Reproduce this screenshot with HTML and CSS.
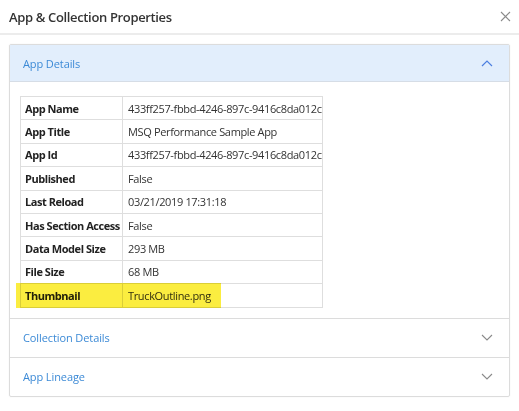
FILE: index.html
```html
<!DOCTYPE html>
<html>
<head>
<meta charset="utf-8">
<link rel="stylesheet" href="styles.css">
</head>
<body>
<div class="dialog">
  <div class="dlg-header">
    <div class="dlg-title">App &amp; Collection Properties</div>
    <svg class="close" width="11" height="11" viewBox="0 0 11 11"><path d="M1 1L10 10M10 1L1 10" stroke="#8a8a8a" stroke-width="1.1" fill="none"/></svg>
  </div>
  <div class="dlg-body">
    <div class="accordion">
      <div class="acc-item open">
        <div class="acc-head">
          <span class="acc-title">App Details</span>
          <svg class="chev" width="12" height="7" viewBox="0 0 12 7"><path d="M1 6L6 1L11 6" stroke="#4d7fe0" stroke-width="1.2" fill="none"/></svg>
        </div>
        <div class="acc-content">
          <div class="tbl-wrap">
            <table class="props">
              <tr><th>App Name</th><td>433ff257-fbbd-4246-897c-9416c8da012c</td></tr>
              <tr><th>App Title</th><td>MSQ Performance Sample App</td></tr>
              <tr><th>App Id</th><td>433ff257-fbbd-4246-897c-9416c8da012c</td></tr>
              <tr><th>Published</th><td>False</td></tr>
              <tr><th>Last Reload</th><td>03/21/2019 17:31:18</td></tr>
              <tr><th>Has Section Access</th><td>False</td></tr>
              <tr><th>Data Model Size</th><td>293 MB</td></tr>
              <tr><th>File Size</th><td>68 MB</td></tr>
              <tr><th>Thumbnail</th><td>TruckOutline.png</td></tr>
            </table>
            <div class="highlight"></div>
          </div>
        </div>
      </div>
      <div class="acc-item">
        <div class="acc-head">
          <span class="acc-title">Collection Details</span>
          <svg class="chev" width="12" height="7" viewBox="0 0 12 7"><path d="M1 1L6 6L11 1" stroke="#8a8a8a" stroke-width="1.1" fill="none"/></svg>
        </div>
      </div>
      <div class="acc-item">
        <div class="acc-head">
          <span class="acc-title">App Lineage</span>
          <svg class="chev" width="12" height="7" viewBox="0 0 12 7"><path d="M1 1L6 6L11 1" stroke="#8a8a8a" stroke-width="1.1" fill="none"/></svg>
        </div>
      </div>
    </div>
  </div>
</div>
</body>
</html>
```

FILE: styles.css
```css
html, body {
  margin: 0;
  padding: 0;
  background: #fff;
}
body {
  font-family: "Open Sans", "Noto Sans", sans-serif;
  color: #222;
}
.dialog {
  width: 519px;
  height: 411px;
  background: #fff;
}
.dlg-header {
  height: 33px;
  display: flex;
  align-items: center;
  justify-content: space-between;
  padding: 0 8px 0 9px;
  border-bottom: 2px solid #ececec;
}
.dlg-title {
  font-size: 13px;
  font-weight: 600;
  color: #333;
  letter-spacing: -0.35px;
}
.dlg-body {
  padding: 9px 9px 0 9px;
}
.accordion {
  border: 1px solid #dcdcdc;
  border-radius: 2px;
  box-shadow: 0 0 2px rgba(0,0,0,0.06);
}
.acc-item + .acc-item {
  border-top: 1px solid #dcdcdc;
}
.acc-head {
  height: 38px;
  display: flex;
  align-items: center;
  justify-content: space-between;
  padding: 0 16px 0 13px;
}
.acc-item.open .acc-head {
  background: #e2eefc;
  height: 36px;
  border-bottom: 1px solid #d6dde6;
}
.acc-title {
  font-size: 11px;
  color: #3c8ad6;
  letter-spacing: -0.1px;
}
.acc-content {
  padding: 14px 10px 10px 10px;
}
.tbl-wrap {
  position: relative;
  width: fit-content;
}
.props {
  border-collapse: collapse;
  table-layout: fixed;
  width: 303px;
  font-size: 11px;
  letter-spacing: -0.35px;
}
.props tr {
  height: 23.4px;
}
.props th, .props td {
  border: 1px solid #dedede;
  padding: 0 4px;
  text-align: left;
  white-space: nowrap;
}
.props th {
  font-weight: 700;
  width: 93px;
  color: #222;
  letter-spacing: -0.45px;
}
.props td {
  color: #333;
  padding: 0 1px 0 5px;
}
.highlight {
  position: absolute;
  left: -4px;
  top: 187px;
  width: 205px;
  height: 25px;
  background: rgba(250, 234, 30, 0.85);
  mix-blend-mode: multiply;
}
```
